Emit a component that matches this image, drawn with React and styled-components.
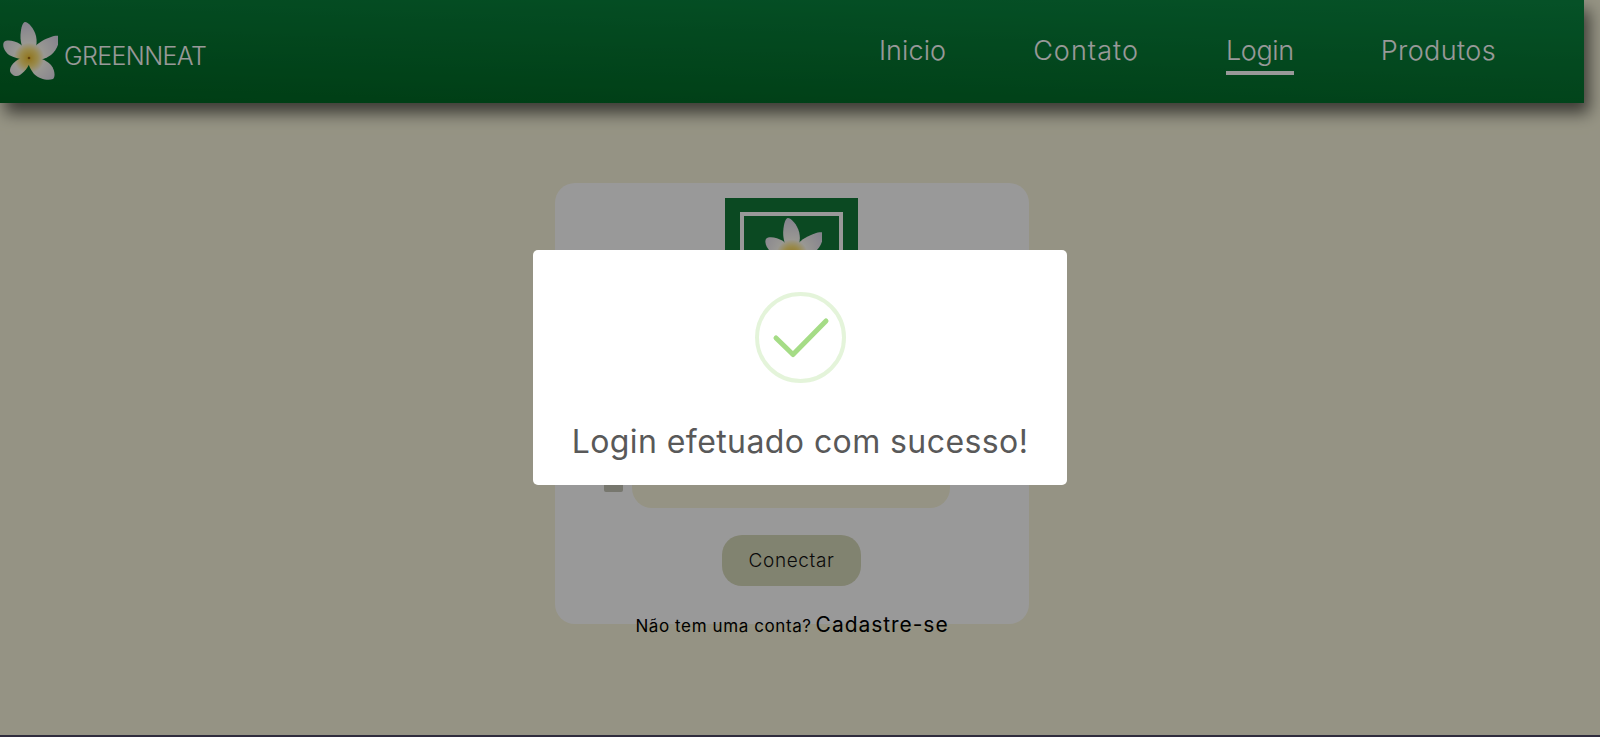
import React from "react";
import styled, { createGlobalStyle } from "styled-components";

const Global = createGlobalStyle`
  html, body { margin: 0; padding: 0; background: #4f4a66; }
  * { box-sizing: border-box; }
  body { font-family: Inter, "Open Sans", sans-serif; overflow: hidden; }
`;

const Page = styled.div`
  width: 1600px;
  height: 735px;
  background: #f9f6dc;
  overflow: hidden;
`;

const NavBar = styled.header`
  width: 1584px;
  height: 103px;
  display: flex;
  justify-content: space-between;
  background: linear-gradient(2deg, #006622 0%, #0a8842 100%);
  box-shadow: 5px 10px 15px rgba(0, 0, 0, 0.6);
`;

const Brand = styled.div`
  display: flex;
  align-items: flex-start;
  padding: 22px 0 0 0;
  gap: 6px;
`;

const BrandName = styled.span`
  margin-top: 19px;
  font-size: 25px;
  line-height: 30px;
  font-weight: 300;
  color: #fff;
  letter-spacing: -0.6px;
`;

const Links = styled.nav`
  display: flex;
  align-items: flex-start;
  gap: 87px;
  padding: 34px 88px 0 0;
`;

const NavLink = styled.a`
  font-size: 27px;
  line-height: 34px;
  font-weight: 300;
  color: #fff;
  height: 41px;
  letter-spacing: ${(p) => p.$spacing};
  border-bottom: 4px solid ${(p) => (p.$active ? "#fff" : "transparent")};
`;

const Main = styled.main`
  width: 1584px;
  padding-top: 80px;
`;

const Card = styled.section`
  width: 474px;
  height: 441px;
  margin: 0 auto;
  padding-top: 15px;
  background: #fff;
  border-radius: 20px;
  display: flex;
  flex-direction: column;
  align-items: center;
`;

const LogoBox = styled.div`
  width: 133px;
  height: 133px;
  flex: none;
  margin-right: 1px;
  padding: 14px 15px;
  background: #137a3a;
`;

const LogoFrame = styled.div`
  height: 105px;
  border: 4px solid #fff;
  display: flex;
  justify-content: center;
  padding-top: 2px;
`;

const Field = styled.div`
  display: flex;
  align-items: flex-start;
  gap: 9px;
  flex: none;
  margin-top: ${(p) => p.$top}px;
  margin-right: 30px;
  width: 346px;
`;

const FieldIcon = styled.span`
  width: 19px;
  height: 22px;
  flex: none;
  margin-top: 7px;
  border-radius: 2px;
  background: #c6c6b8;
`;

const Input = styled.div`
  flex: 1;
  height: 45px;
  border-radius: 20px;
  background: #f9f6dc;
`;

const Connect = styled.button`
  width: 139px;
  height: 51px;
  flex: none;
  margin-top: 27px;
  margin-right: 1px;
  border: 0;
  border-radius: 20px;
  background: #d8dabb;
  font-family: inherit;
  font-size: 19px;
  font-weight: 300;
  color: #111;
  letter-spacing: 0.6px;
`;

const SignUp = styled.p`
  flex: none;
  margin: 25px 0 0;
  font-size: 17px;
  line-height: 28px;
  color: #000;
  white-space: nowrap;
  letter-spacing: 0.6px;
`;

const SignUpLink = styled.a`
  font-size: 21px;
  margin-left: 4px;
  letter-spacing: 0.95px;
`;

const Overlay = styled.div`
  position: fixed;
  inset: 0;
  background: rgba(0, 0, 0, 0.4);
  display: flex;
  align-items: center;
  justify-content: center;
`;

const Modal = styled.div`
  width: 534px;
  height: 235px;
  margin-bottom: 2px;
  padding-top: 42px;
  background: #fff;
  border-radius: 5px;
  display: flex;
  flex-direction: column;
  align-items: center;
`;

const ModalTitle = styled.h2`
  margin: 38px 0 0;
  font-size: 32px;
  line-height: 42px;
  font-weight: 400;
  color: #595959;
  white-space: nowrap;
  letter-spacing: 0.42px;
`;

const Flower = ({ size, idBase }) => (
  <svg width={size} height={size} viewBox="-29 -36 58 58" aria-hidden="true">
    <defs>
      <radialGradient id={idBase} gradientUnits="userSpaceOnUse" cx="0" cy="0" r="34">
        <stop offset="0" stopColor="#f2c230" />
        <stop offset="0.25" stopColor="#ffe680" />
        <stop offset="0.45" stopColor="#fffdf5" />
        <stop offset="1" stopColor="#e0dcec" />
      </radialGradient>
    </defs>
    <g fill={`url(#${idBase})`}>
      <path d="M0 2C-5 -4 -9 -14 -8.5 -23C-8 -31 -6 -36 -4 -36C-1 -36 5 -30 7 -22C9 -13 6 -5 0 2Z" />
      <path d="M-1 2C0 -6 6 -13 13 -17C20 -21 27 -23 29.5 -22C31 -16 28 -8 22 -3C15 2 6 4 -1 2Z" />
      <path d="M-1 -1C7 -2 16 1 22 7C26 12 26.5 19 24 21C19 23 10 21 5 16C1 11 -2 5 -1 -1Z" />
      <path d="M3 -1C1 6 -3 13 -9 17C-13 19.5 -18 17 -19 13C-19.5 8 -14 3 -9 0.5C-5 -1 -1 -2 3 -1Z" />
      <path d="M3 3C-5 2 -15 0 -20 -3C-25 -7 -27 -13 -25 -16C-22 -19 -14 -17 -9 -14C-4 -10 1 -4 3 3Z" />
    </g>
    <circle cx="0" cy="0" r="1.3" fill="#a06a10" />
  </svg>
);

const SuccessIcon = () => (
  <svg width="91" height="91" viewBox="0 0 91 91" aria-hidden="true">
    <circle cx="45.5" cy="45.5" r="43.5" fill="none" stroke="#a5dc86" strokeOpacity="0.3" strokeWidth="4" />
    <path
      d="M21 46L38 62.5L71 29"
      fill="none"
      stroke="#a5dc86"
      strokeWidth="5"
      strokeLinecap="round"
      strokeLinejoin="round"
    />
  </svg>
);

export default function App() {
  return (
    <>
      <Global />
      <Page>
        <NavBar>
          <Brand>
            <Flower size={58} idBase="navFlower" />
            <BrandName>GREENNEAT</BrandName>
          </Brand>
          <Links>
            <NavLink $spacing="0.1px">Inicio</NavLink>
            <NavLink $spacing="1.05px">Contato</NavLink>
            <NavLink $active $spacing="-0.4px">Login</NavLink>
            <NavLink $spacing="0.4px">Produtos</NavLink>
          </Links>
        </NavBar>
        <Main>
          <Card>
            <LogoBox>
              <LogoFrame>
                <Flower size={60} idBase="cardFlower" />
              </LogoFrame>
            </LogoBox>
            <Field $top={49}>
              <FieldIcon />
              <Input />
            </Field>
            <Field $top={38}>
              <FieldIcon />
              <Input />
            </Field>
            <Connect>Conectar</Connect>
            <SignUp>
              Não tem uma conta?<SignUpLink>Cadastre-se</SignUpLink>
            </SignUp>
          </Card>
        </Main>
      </Page>
      <Overlay>
        <Modal>
          <SuccessIcon />
          <ModalTitle>Login efetuado com sucesso!</ModalTitle>
        </Modal>
      </Overlay>
    </>
  );
}
